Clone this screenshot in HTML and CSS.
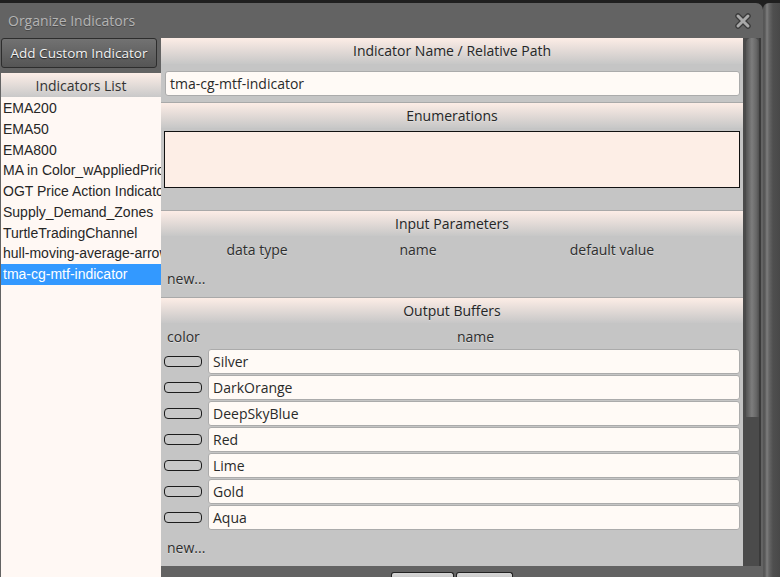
FILE: index.html
```html
<!DOCTYPE html>
<html lang="en">
<head>
    <meta charset="UTF-8">
    <title>Organize Indicators</title>
    <link rel="stylesheet" href="styles.css">
</head>
<body>
    <div class="desktop">
        <div class="dialog">
            <!-- Title bar -->
            <div class="titlebar">
                <span class="title">Organize Indicators</span>
                <svg class="close" width="16" height="16" viewBox="0 0 16 16">
                    <path d="M3 3 L13 13 M13 3 L3 13" stroke="#3a3a3a" stroke-width="5.5" stroke-linecap="round"/>
                    <path d="M3 3 L13 13 M13 3 L3 13" stroke="#a9a9a9" stroke-width="3" stroke-linecap="round"/>
                </svg>
            </div>

            <div class="dialog-body">
                <!-- Left column: list of indicators -->
                <div class="sidebar">
                    <button class="add-button">Add Custom Indicator</button>
                    <div class="list-head">Indicators List</div>
                    <ul class="indicator-list">
                        <li>EMA200</li>
                        <li>EMA50</li>
                        <li>EMA800</li>
                        <li>MA in Color_wAppliedPrice</li>
                        <li>OGT Price Action Indicator</li>
                        <li>Supply_Demand_Zones</li>
                        <li>TurtleTradingChannel</li>
                        <li>hull-moving-average-arrows</li>
                        <li class="selected">tma-cg-mtf-indicator</li>
                    </ul>
                </div>

                <!-- Right column: editor -->
                <div class="main">
                    <div class="main-row">
                        <div class="editor">
                            <div class="section">
                                <div class="sec-head">Indicator Name / Relative Path</div>
                                <div class="text-field name-field">tma-cg-mtf-indicator</div>
                            </div>

                            <div class="section">
                                <div class="sec-head">Enumerations</div>
                                <div class="enum-box"></div>
                            </div>

                            <div class="section">
                                <div class="sec-head">Input Parameters</div>
                                <div class="param-cols">
                                    <span>data type</span>
                                    <span>name</span>
                                    <span>default value</span>
                                </div>
                                <div class="new-link">new...</div>
                            </div>

                            <div class="section last">
                                <div class="sec-head">Output Buffers</div>
                                <div class="buffer-cols">
                                    <span class="col-color">color</span>
                                    <span class="col-name">name</span>
                                </div>
                                <div class="buffers">
                                    <div class="buffer"><span class="swatch"></span><div class="text-field">Silver</div></div>
                                    <div class="buffer"><span class="swatch"></span><div class="text-field">DarkOrange</div></div>
                                    <div class="buffer"><span class="swatch"></span><div class="text-field">DeepSkyBlue</div></div>
                                    <div class="buffer"><span class="swatch"></span><div class="text-field">Red</div></div>
                                    <div class="buffer"><span class="swatch"></span><div class="text-field">Lime</div></div>
                                    <div class="buffer"><span class="swatch"></span><div class="text-field">Gold</div></div>
                                    <div class="buffer"><span class="swatch"></span><div class="text-field">Aqua</div></div>
                                </div>
                                <div class="new-link">new...</div>
                            </div>
                        </div>
                        <div class="scrollbar"><div class="thumb"></div></div>
                    </div>
                    <div class="footer">
                        <button class="foot-button ok"></button>
                        <button class="foot-button cancel"></button>
                    </div>
                </div>
            </div>
        </div>
        <div class="backdrop"></div>
    </div>
</body>
</html>
```

FILE: styles.css
```css
body {
    margin: 0;
    background-color: #1f1f1f;
    font-family: "Open Sans", "Noto Sans", sans-serif;
    overflow: hidden;
}

.desktop {
    display: flex;
    height: 577px;
    padding-top: 3px;
    box-sizing: border-box;
}

.dialog {
    width: 763px;
    background-color: #636363;
    border-top-right-radius: 7px;
    display: flex;
    flex-direction: column;
    overflow: hidden;
}

.backdrop {
    flex: 1;
    background: linear-gradient(to right, #555 0, #5a5a5a 2px, #7e7e7e 4px, #666 6px, #4f4f4f 10px, #484848 100%);
    border-top-left-radius: 6px;
}

/* Title bar */
.titlebar {
    height: 35px;
    flex-shrink: 0;
    display: flex;
    align-items: center;
    justify-content: space-between;
    padding: 0 12px 0 8px;
}

.title {
    color: #b4b4b4;
    font-size: 14px;
    text-shadow: 0 1px 0 #4a4a4a;
    margin-top: -1px;
}

.close {
    margin-top: 1px;
}

.dialog-body {
    flex: 1;
    display: flex;
    min-height: 0;
}

/* Left column */
.sidebar {
    width: 160px;
    margin-left: 1px;
    display: flex;
    flex-direction: column;
}

.add-button {
    width: 156px;
    height: 30px;
    flex-shrink: 0;
    margin: 0 0 5px 0;
    padding: 0;
    background: linear-gradient(#727272, #555);
    border: 1px solid #2d2d2d;
    border-radius: 3px;
    color: #f2f2f2;
    font-family: "Open Sans", "Noto Sans", sans-serif;
    font-size: 13.5px;
    text-shadow: 0 1px 1px #222;
}

.list-head {
    height: 24px;
    flex-shrink: 0;
    line-height: 25px;
    text-align: center;
    font-size: 14px;
    color: #333;
    background: linear-gradient(#fdeee7, #c9c9c9);
}

.indicator-list {
    flex: 1;
    list-style: none;
    margin: 0;
    padding: 1px 0 0 0;
    background-color: #fff8f4;
    font-family: "Liberation Sans", Arial, sans-serif;
    font-size: 14px;
    color: #262626;
}

.indicator-list li {
    height: 20.75px;
    line-height: 21px;
    padding-left: 2px;
    white-space: nowrap;
    overflow: hidden;
}

.indicator-list li.selected {
    background-color: #3399ff;
    color: #fff;
}

/* Right column */
.main {
    width: 600px;
    display: flex;
    flex-direction: column;
}

.main-row {
    display: flex;
    height: 528px;
    flex-shrink: 0;
}

.editor {
    width: 582px;
    background-color: #c5c5c5;
    color: #2e2e2e;
    font-size: 14px;
    text-shadow: 0 1px 0 #dcdcdc;
}

.section {
    border-top: 1px solid #a9a9a9;
}

.section:first-child {
    border-top: none;
}

.sec-head {
    height: 25px;
    line-height: 26px;
    text-align: center;
    color: #262626;
    background: linear-gradient(#fdede6, #c7c7c7);
}

.section:first-child .sec-head {
    height: 26px;
}

.text-field {
    height: 23px;
    line-height: 23px;
    padding-left: 4px;
    background-color: #fffaf6;
    border: 1px solid #ababab;
    border-radius: 3px;
    color: #2a2a2a;
    text-shadow: none;
}

.name-field {
    margin: 7px 3px 6px 4px;
}

.enum-box {
    height: 55px;
    margin: 3px 3px 22px 3px;
    background-color: #fdeee6;
    border: 1px solid #111;
}

.param-cols {
    display: grid;
    grid-template-columns: 192px 130px 258px;
    text-align: center;
    height: 20px;
    line-height: 20px;
    margin-top: 4px;
}

.new-link {
    padding-left: 6px;
    height: 22px;
    line-height: 22px;
    margin-top: 8px;
    margin-bottom: 7px;
}

.buffer-cols {
    display: flex;
    height: 20px;
    line-height: 20px;
    margin-top: 4px;
}

.col-color {
    width: 41px;
    padding-left: 6px;
}

.col-name {
    flex: 1;
    text-align: center;
}

.buffers {
    display: flex;
    flex-direction: column;
    gap: 1px;
    margin-top: 2px;
    padding: 0 3px;
}

.buffer {
    display: flex;
    align-items: center;
    gap: 6px;
}

.buffer .text-field {
    flex: 1;
}

.swatch {
    width: 36px;
    height: 9px;
    border: 1px solid #1c1c1c;
    border-radius: 4px;
    background-color: #c8c8c8;
}

.section.last .new-link {
    margin-top: 7px;
}

/* Scrollbar */
.scrollbar {
    width: 18px;
    background-color: #4b4b4b;
    border-right: 2px solid #3a3a3a;
    box-sizing: border-box;
}

.thumb {
    height: 379px;
    margin-left: 3px;
    width: 13px;
    background: linear-gradient(to right, #555, #7d7d7d 45%, #666 80%, #505050);
    border-radius: 5px 5px 0 0;
}

/* Footer */
.footer {
    flex: 1;
    display: flex;
    padding-left: 230px;
    padding-top: 6px;
    gap: 2px;
}

.foot-button {
    height: 12px;
    padding: 0;
    border: 1px solid #222;
    border-bottom: none;
    border-radius: 3px 3px 0 0;
    background: linear-gradient(#d6d6d6, #bbb);
}

.foot-button.ok {
    width: 63px;
}

.foot-button.cancel {
    width: 57px;
}
```
